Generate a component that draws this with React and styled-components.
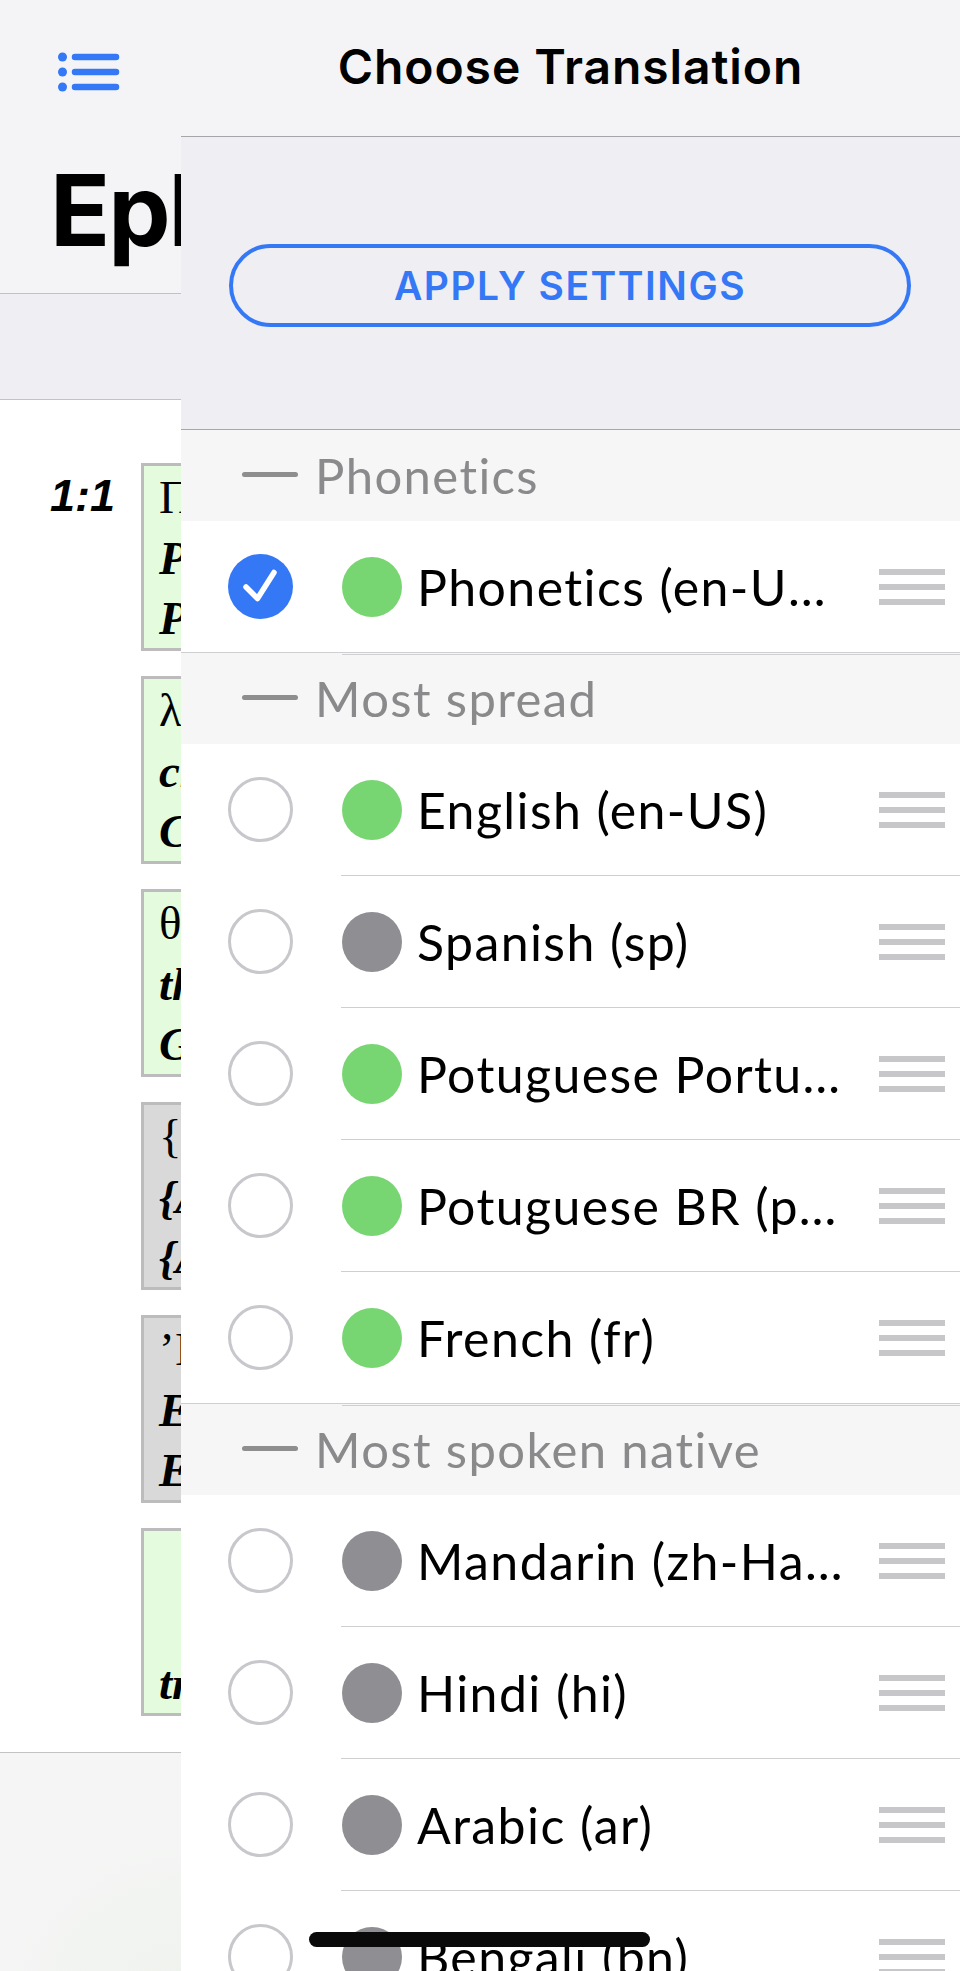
import React from 'react';
import styled, { createGlobalStyle } from 'styled-components';

// --- Mock Data ---
const GREEN = '#78d672';
const GRAY = '#8e8e93';

const sections = [
  {
    title: 'Phonetics',
    items: [{ name: 'Phonetics (en-US IPA)', color: GREEN, checked: true }],
  },
  {
    title: 'Most spread',
    items: [
      { name: 'English (en-US)', color: GREEN },
      { name: 'Spanish (sp)', color: GRAY },
      { name: 'Potuguese Portugal (pt-PT)', color: GREEN },
      { name: 'Potuguese BR (pt-BR)', color: GREEN },
      { name: 'French (fr)', color: GREEN },
    ],
  },
  {
    title: 'Most spoken native',
    items: [
      { name: 'Mandarin (zh-Hans)', color: GRAY },
      { name: 'Hindi (hi)', color: GRAY },
      { name: 'Arabic (ar)', color: GRAY },
      { name: 'Bengali (bn)', color: GRAY },
    ],
  },
];

const words = [
  { greek: 'Παῦλος', translit: 'Paulos', english: 'Paul', tone: 'green' },
  { greek: 'λόγου', translit: 'christou', english: 'Christ', tone: 'green' },
  { greek: 'θεοῦ', translit: 'theou', english: 'God', tone: 'green' },
  { greek: '{Παῦλος}', translit: '{Apostolos}', english: '{Apostle}', tone: 'gray' },
  { greek: 'ʼΙησοῦ', translit: 'Ephesō', english: 'Ephesus', tone: 'gray' },
  { greek: '\u00a0', translit: '\u00a0', english: 'truly', tone: 'green' },
];

// --- Styled Components ---
const GlobalStyle = createGlobalStyle`
  html, body {
    margin: 0;
    padding: 0;
    background: #ffffff;
  }
  * {
    box-sizing: border-box;
  }
`;

const Screen = styled.div`
  position: relative;
  width: 960px;
  height: 1971px;
  overflow: hidden;
  display: grid;
  grid-template-columns: 181px minmax(0, 1fr);
  font-family: Lato, 'Noto Sans', sans-serif;
`;

/* ----- page underneath ----- */
const BackPage = styled.div`
  display: flex;
  flex-direction: column;
  min-width: 0;
  overflow: hidden;
  background: #ffffff;
`;

const BackNav = styled.div`
  height: 137px;
  flex-shrink: 0;
  background: #f4f4f6;
  padding: 52px 0 0 58px;
`;

const BigTitle = styled.div`
  height: 157px;
  flex-shrink: 0;
  background: #f4f4f6;
  border-bottom: 1px solid #c2c2c4;
  padding: 24px 0 0 50px;
  font-family: Inter, 'Liberation Sans', sans-serif;
  font-weight: 700;
  font-size: 99px;
  line-height: 1;
  letter-spacing: -2px;
  white-space: nowrap;
  color: #000;
`;

const ToolBand = styled.div`
  height: 106px;
  flex-shrink: 0;
  background: #eeeef3;
  border-bottom: 1px solid #c2c2c4;
`;

const VerseArea = styled.div`
  display: flex;
  align-items: flex-start;
  gap: 26px;
  padding: 63px 0 36px 0;
  border-bottom: 1px solid #c2c2c4;
`;

const VerseNumber = styled.div`
  width: 115px;
  flex-shrink: 0;
  text-align: right;
  font-family: 'Liberation Sans', Arial, sans-serif;
  font-weight: 700;
  font-style: italic;
  font-size: 45px;
  line-height: 60px;
  margin-top: 3px;
  color: #000;
`;

const WordColumn = styled.div`
  display: flex;
  flex-direction: column;
  gap: 25px;
`;

const WordBox = styled.div`
  width: max-content;
  height: 188px;
  padding: 0 14px 0 15px;
  border: 3px solid #bcbcbc;
  background: ${p => (p.tone === 'gray' ? '#d9d9d9' : '#e4fcdd')};
  text-align: left;
  font-family: 'Liberation Serif', 'Times New Roman', serif;
  font-size: 47px;
  color: #000;
  white-space: nowrap;
`;

const GreekLine = styled.div`
  line-height: 62px;
`;

const GlossLine = styled.div`
  line-height: 60px;
  font-weight: 700;
  font-style: italic;
`;

const BackFooter = styled.div`
  flex: 1;
  background: radial-gradient(circle at 100% 100%, #eef2ec 0%, #f4f5f4 55%, #f5f5f5 100%);
`;

/* ----- translation panel ----- */
const Panel = styled.div`
  display: flex;
  flex-direction: column;
  min-width: 0;
  background: #ffffff;
`;

const PanelHeader = styled.div`
  height: 137px;
  flex-shrink: 0;
  display: flex;
  align-items: center;
  justify-content: center;
  background: #f4f4f6;
  border-bottom: 1px solid #a6a6a8;
  padding-bottom: 4px;
`;

const PanelTitle = styled.h1`
  margin: 0;
  font-family: Inter, 'Liberation Sans', sans-serif;
  font-weight: 600;
  font-size: 48px;
  letter-spacing: 0.9px;
  color: #000;
`;

const SettingsArea = styled.div`
  height: 293px;
  flex-shrink: 0;
  padding: 107px 49px 0 48px;
  background: #eeeef3;
  border-bottom: 1px solid #a6a6a8;
`;

const ApplyButton = styled.button`
  display: block;
  width: 100%;
  height: 83px;
  border: 4px solid #3478f6;
  border-radius: 42px;
  background: transparent;
  color: #3478f6;
  font-family: Inter, 'Liberation Sans', sans-serif;
  font-weight: 600;
  font-size: 39px;
  letter-spacing: 1.5px;
  cursor: pointer;
`;

const SectionHeader = styled.div`
  height: 91px;
  display: flex;
  align-items: center;
  gap: 17px;
  padding-left: 61px;
  padding-bottom: 2px;
  background: ${p =>
    p.first
      ? '#f6f6f6'
      : 'linear-gradient(#cfcfd1, #cfcfd1) 161px 1px / 100% 1px no-repeat, #f6f6f6'};
`;

const Dash = styled.span`
  width: 56px;
  height: 5px;
  border-radius: 3px;
  background: #8e8e8e;
`;

const SectionTitle = styled.span`
  font-size: 49px;
  letter-spacing: 1.4px;
  color: #8a8a8c;
`;

const Row = styled.div`
  height: 132px;
  display: flex;
  align-items: center;
  padding: 0 15px 0 47px;
  border-bottom: 1px solid #cfcfd1;
  ${p => (p.inset ? 'border-image: linear-gradient(to right, transparent 161px, #cfcfd1 161px) 1;' : '')}
`;

const Radio = styled.div`
  width: 65px;
  height: 65px;
  flex-shrink: 0;
  border-radius: 50%;
  border: ${p => (p.checked ? 'none' : '3px solid #c7c7cc')};
  background: ${p => (p.checked ? '#3478f6' : '#ffffff')};
  display: flex;
  align-items: center;
  justify-content: center;
`;

const StatusDot = styled.span`
  width: 60px;
  height: 60px;
  flex-shrink: 0;
  margin-left: 49px;
  border-radius: 50%;
  background: ${p => p.color};
`;

const LangName = styled.span`
  flex: 1;
  min-width: 0;
  margin: 0 33px 0 15px;
  font-size: 50px;
  letter-spacing: 1.4px;
  color: #000;
  white-space: nowrap;
  overflow: hidden;
  text-overflow: ellipsis;
`;

const Handle = styled.div`
  width: 66px;
  display: flex;
  flex-direction: column;
  gap: 9px;
  flex-shrink: 0;
`;

const HandleLine = styled.span`
  height: 6px;
  background: #c7c7c9;
`;

const HomeIndicator = styled.div`
  position: absolute;
  left: 309px;
  bottom: 24px;
  width: 341px;
  height: 15px;
  border-radius: 8px;
  background: #0a0a0a;
`;

// --- Icons ---
const ListIcon = () => (
  <svg width="62" height="40" viewBox="0 0 62 40">
    <g fill="#3478f6">
      <circle cx="4.5" cy="5" r="4.5" />
      <circle cx="4.5" cy="20" r="4.5" />
      <circle cx="4.5" cy="35" r="4.5" />
    </g>
    <g stroke="#3478f6" strokeWidth="6.5" strokeLinecap="round">
      <line x1="17" y1="5" x2="58" y2="5" />
      <line x1="17" y1="20" x2="58" y2="20" />
      <line x1="17" y1="35" x2="58" y2="35" />
    </g>
  </svg>
);

const CheckIcon = () => (
  <svg width="65" height="65" viewBox="0 0 65 65">
    <path
      d="M18 33 L29.5 44.5 L46 18.5"
      fill="none"
      stroke="#ffffff"
      strokeWidth="5.5"
      strokeLinecap="round"
      strokeLinejoin="round"
    />
  </svg>
);

// --- Main App Component ---
const App = () => {
  return (
    <>
      <GlobalStyle />
      <Screen>
        <BackPage>
          <BackNav>
            <ListIcon />
          </BackNav>
          <BigTitle>Ephesians</BigTitle>
          <ToolBand />
          <VerseArea>
            <VerseNumber>1:1</VerseNumber>
            <WordColumn>
              {words.map((w, i) => (
                <WordBox key={i} tone={w.tone}>
                  <GreekLine>{w.greek}</GreekLine>
                  <GlossLine>{w.translit}</GlossLine>
                  <GlossLine>{w.english}</GlossLine>
                </WordBox>
              ))}
            </WordColumn>
          </VerseArea>
          <BackFooter />
        </BackPage>

        <Panel>
          <PanelHeader>
            <PanelTitle>Choose Translation</PanelTitle>
          </PanelHeader>
          <SettingsArea>
            <ApplyButton>APPLY SETTINGS</ApplyButton>
          </SettingsArea>
          {sections.map((section, si) => (
            <div key={section.title}>
              <SectionHeader first={si === 0}>
                <Dash />
                <SectionTitle>{section.title}</SectionTitle>
              </SectionHeader>
              {section.items.map((item, ii) => (
                <Row key={item.name} inset={ii < section.items.length - 1}>
                  <Radio checked={item.checked}>{item.checked && <CheckIcon />}</Radio>
                  <StatusDot color={item.color} />
                  <LangName>{item.name}</LangName>
                  <Handle>
                    <HandleLine />
                    <HandleLine />
                    <HandleLine />
                  </Handle>
                </Row>
              ))}
            </div>
          ))}
        </Panel>

        <HomeIndicator />
      </Screen>
    </>
  );
};

export default App;
